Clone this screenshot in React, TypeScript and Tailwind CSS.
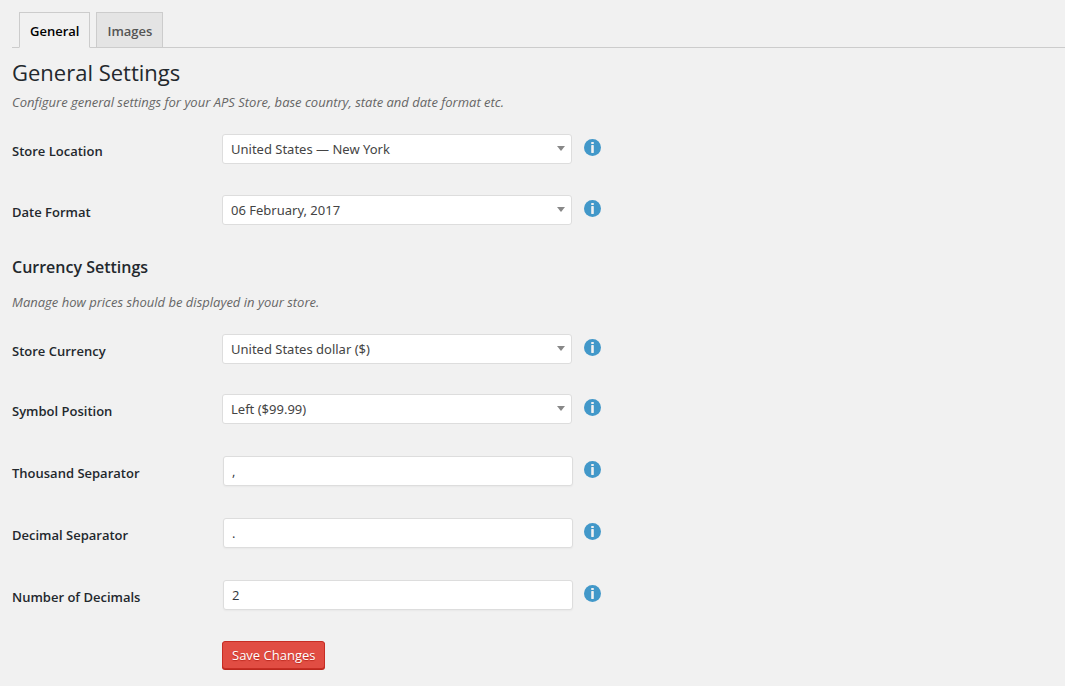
import React, { useState } from 'react';

interface FieldProps {
  id: string;
  label: string;
  help: string;
  children: React.ReactNode;
}

const InfoIcon: React.FC = () => (
  <svg viewBox="0 0 17 17" className="block w-[17px] h-[17px]" aria-hidden="true">
    <circle cx="8.5" cy="8.5" r="8.5" fill="#4298c9" />
    <rect x="7.2" y="3" width="2.6" height="2" rx="0.5" fill="#f1f1f1" />
    <rect x="7.2" y="6" width="2.6" height="8" rx="0.4" fill="#f1f1f1" />
  </svg>
);

// One settings row: label, control and help button
const Field: React.FC<FieldProps> = ({ id, label, help, children }) => (
  <div className="flex items-start">
    <label htmlFor={id} className="w-[210px] shrink-0 pt-[7px] text-[13px] leading-5 font-semibold text-[#23282d]">
      {label}
    </label>
    <div className="w-[351px] shrink-0">{children}</div>
    <button type="button" title={help} aria-label={help} className="ml-[11px] mt-[5px]">
      <InfoIcon />
    </button>
  </div>
);

interface SelectProps {
  id: string;
  options: string[];
}

const Select: React.FC<SelectProps> = ({ id, options }) => (
  <div className="relative w-[350px]">
    <select
      id={id}
      className="block w-full h-[30px] appearance-none rounded-[3px] border border-[#dddddd] bg-white pt-0.5 pl-2 pr-7 font-['Noto_Sans',sans-serif] text-[13px] text-[#444444]"
    >
      {options.map((option) => (
        <option key={option}>{option}</option>
      ))}
    </select>
    <svg viewBox="0 0 8 5" className="pointer-events-none absolute right-[7px] top-3 w-2 h-[5px]" aria-hidden="true">
      <path d="M0 0h8L4 5z" fill="#888888" />
    </svg>
  </div>
);

interface TextInputProps {
  id: string;
  initial: string;
}

const TextInput: React.FC<TextInputProps> = ({ id, initial }) => {
  const [value, setValue] = useState(initial);

  return (
    <input
      id={id}
      type="text"
      value={value}
      onChange={(e) => setValue(e.target.value)}
      className="ml-px block w-[350px] h-[30px] rounded-[3px] border border-[#dddddd] bg-white px-2 text-[13px] text-[#32373c] shadow-[0_1px_2px_rgba(0,0,0,0.04)]"
    />
  );
};

const tabs = ['General', 'Images'];

const App: React.FC = () => {
  const [activeTab, setActiveTab] = useState('General');

  return (
    <div className="min-h-screen bg-[#f1f1f1] pt-3 pl-3 pb-4 font-['Open_Sans','Noto_Sans',sans-serif] text-[13px]">
      <nav className="flex gap-1.5 border-b border-[#cccccc] pl-[7px]">
        {tabs.map((tab) => (
          <button
            key={tab}
            type="button"
            onClick={() => setActiveTab(tab)}
            className={`-mb-px h-9 border px-2.5 pt-px text-[13px] leading-6 font-semibold ${
              activeTab === tab
                ? 'border-[#cccccc] border-b-[#f1f1f1] bg-[#f1f1f1] text-black'
                : 'border-[#cccccc] bg-[#e4e4e4] text-[#555555]'
            }`}
          >
            {tab}
          </button>
        ))}
      </nav>

      <form onSubmit={(e) => e.preventDefault()}>
        <h2 className="mt-2 text-[22px] leading-8 text-[#23282d]">General Settings</h2>
        <p className="mt-1 text-[13px] leading-5 italic text-[#666666]">
          Configure general settings for your APS Store, base country, state and date format etc.
        </p>

        <div className="mt-[22px] flex flex-col gap-[31px]">
          <Field id="store-location" label="Store Location" help="Where your store is based">
            <Select id="store-location" options={['United States — New York', 'United States — California']} />
          </Field>
          <Field id="date-format" label="Date Format" help="How dates are displayed">
            <Select id="date-format" options={['06 February, 2017', 'February 06, 2017']} />
          </Field>
        </div>

        <h3 className="mt-[30px] text-base leading-6 font-semibold text-[#23282d]">Currency Settings</h3>
        <p className="mt-[13px] text-[13px] leading-5 italic text-[#666666]">
          Manage how prices should be displayed in your store.
        </p>

        <div className="mt-[22px] flex flex-col gap-[30px]">
          <Field id="store-currency" label="Store Currency" help="Currency used for prices">
            <Select id="store-currency" options={['United States dollar ($)', 'Euro (€)']} />
          </Field>
          <Field id="symbol-position" label="Symbol Position" help="Position of the currency symbol">
            <Select id="symbol-position" options={['Left ($99.99)', 'Right (99.99$)']} />
          </Field>
        </div>
        <div className="mt-8 flex flex-col gap-8">
          <Field id="thousand-separator" label="Thousand Separator" help="Separator between thousands">
            <TextInput id="thousand-separator" initial="," />
          </Field>
          <Field id="decimal-separator" label="Decimal Separator" help="Separator before decimals">
            <TextInput id="decimal-separator" initial="." />
          </Field>
          <Field id="decimals" label="Number of Decimals" help="Decimals shown in prices">
            <TextInput id="decimals" initial="2" />
          </Field>
        </div>

        <button
          type="submit"
          className="mt-[31px] ml-[210px] block h-7 rounded-[3px] border border-[#c62d24] bg-[#e14d43] px-[9px] pt-0.5 text-[13px] text-white shadow-[0_1px_0_#ba281e] [text-shadow:0_1px_1px_#ba281e]"
        >
          Save Changes
        </button>
      </form>
    </div>
  );
};

export default App;
